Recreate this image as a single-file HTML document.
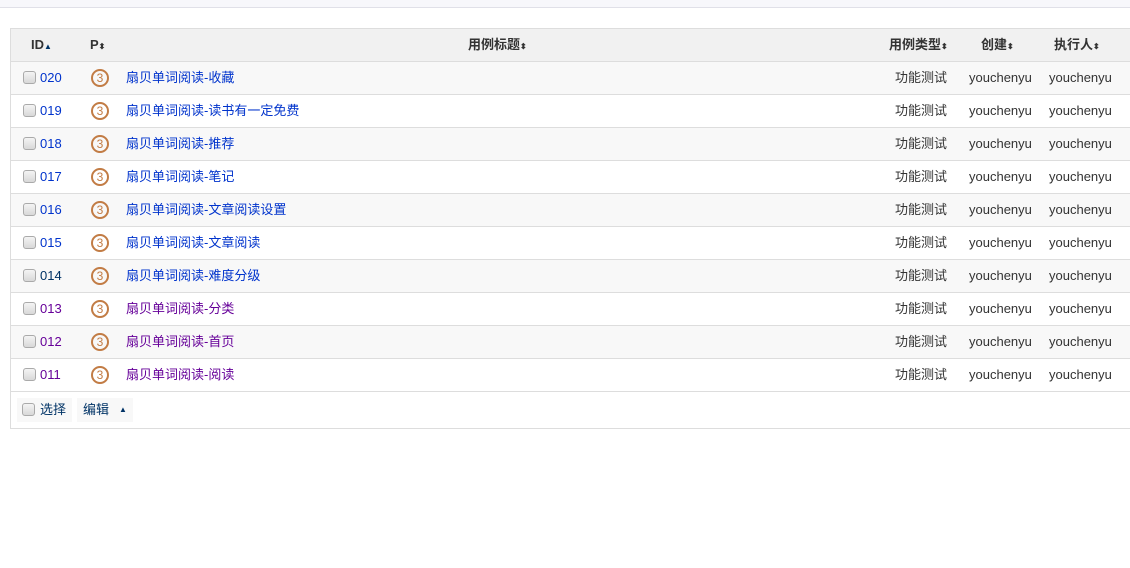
<!DOCTYPE html><html><head><meta charset="utf-8"><style>
body{margin:0;background:#fff;font-family:"Liberation Sans","Noto Sans CJK SC",sans-serif;font-size:13px;color:#333;width:1130px;height:568px;overflow:hidden;position:relative}
.top{position:absolute;left:0;top:0;width:1130px;height:7px;background:#f7f7fb;border-bottom:1px solid #e0e0e8}
.tbl{position:absolute;left:10px;top:28px;width:1125px;border:1px solid #ddd;border-right:none}
.row{position:relative;height:32px;border-bottom:1px solid #ddd;line-height:32px}
.hd{background:#f1f1f1;font-weight:bold;color:#333}
.even{background:#f8f8f8}
.c{position:absolute;top:0;white-space:nowrap}
.cb{position:absolute;left:12px;top:9px;width:11px;height:11px;border:1px solid #aaa;border-radius:3px;background:linear-gradient(#f4f4f4,#d8d8d8)}
a{color:#03c;text-decoration:none}
.v a{color:#609}
.p{position:absolute;left:80px;top:7px;width:14px;height:14px;border:2px solid #c27c45;border-radius:50%;color:#c27c45;font-size:12px;line-height:14px;text-align:center}
.s{font-size:8px;color:#333}
.foot{height:36px;position:relative}
</style></head><body>
<div class="top"></div>
<div class="tbl">
<div class="row hd"><span class="c" style="left:20px">ID<span class="s" style="color:#036">▲</span></span><span class="c" style="left:79px">P<span class="s">⬍</span></span><span class="c" style="left:457px">用例标题<span class="s">⬍</span></span><span class="c" style="left:878px">用例类型<span class="s">⬍</span></span><span class="c" style="left:970px">创建<span class="s">⬍</span></span><span class="c" style="left:1043px">执行人<span class="s">⬍</span></span></div>
<div class="row even"><span class="cb"></span><span class="c" style="left:29px"><a>020</a></span><span class="p">3</span><span class="c" style="left:115px"><a>扇贝单词阅读-收藏</a></span><span class="c" style="left:884px">功能测试</span><span class="c" style="left:958px">youchenyu</span><span class="c" style="left:1038px">youchenyu</span></div>
<div class="row"><span class="cb"></span><span class="c" style="left:29px"><a>019</a></span><span class="p">3</span><span class="c" style="left:115px"><a>扇贝单词阅读-读书有一定免费</a></span><span class="c" style="left:884px">功能测试</span><span class="c" style="left:958px">youchenyu</span><span class="c" style="left:1038px">youchenyu</span></div>
<div class="row even"><span class="cb"></span><span class="c" style="left:29px"><a>018</a></span><span class="p">3</span><span class="c" style="left:115px"><a>扇贝单词阅读-推荐</a></span><span class="c" style="left:884px">功能测试</span><span class="c" style="left:958px">youchenyu</span><span class="c" style="left:1038px">youchenyu</span></div>
<div class="row"><span class="cb"></span><span class="c" style="left:29px"><a>017</a></span><span class="p">3</span><span class="c" style="left:115px"><a>扇贝单词阅读-笔记</a></span><span class="c" style="left:884px">功能测试</span><span class="c" style="left:958px">youchenyu</span><span class="c" style="left:1038px">youchenyu</span></div>
<div class="row even"><span class="cb"></span><span class="c" style="left:29px"><a>016</a></span><span class="p">3</span><span class="c" style="left:115px"><a>扇贝单词阅读-文章阅读设置</a></span><span class="c" style="left:884px">功能测试</span><span class="c" style="left:958px">youchenyu</span><span class="c" style="left:1038px">youchenyu</span></div>
<div class="row"><span class="cb"></span><span class="c" style="left:29px"><a>015</a></span><span class="p">3</span><span class="c" style="left:115px"><a>扇贝单词阅读-文章阅读</a></span><span class="c" style="left:884px">功能测试</span><span class="c" style="left:958px">youchenyu</span><span class="c" style="left:1038px">youchenyu</span></div>
<div class="row even"><span class="cb"></span><span class="c" style="left:29px"><a style="color:#036">014</a></span><span class="p">3</span><span class="c" style="left:115px"><a>扇贝单词阅读-难度分级</a></span><span class="c" style="left:884px">功能测试</span><span class="c" style="left:958px">youchenyu</span><span class="c" style="left:1038px">youchenyu</span></div>
<div class="row v"><span class="cb"></span><span class="c" style="left:29px"><a>013</a></span><span class="p">3</span><span class="c" style="left:115px"><a>扇贝单词阅读-分类</a></span><span class="c" style="left:884px">功能测试</span><span class="c" style="left:958px">youchenyu</span><span class="c" style="left:1038px">youchenyu</span></div>
<div class="row even v"><span class="cb"></span><span class="c" style="left:29px"><a>012</a></span><span class="p">3</span><span class="c" style="left:115px"><a>扇贝单词阅读-首页</a></span><span class="c" style="left:884px">功能测试</span><span class="c" style="left:958px">youchenyu</span><span class="c" style="left:1038px">youchenyu</span></div>
<div class="row v"><span class="cb"></span><span class="c" style="left:29px"><a>011</a></span><span class="p">3</span><span class="c" style="left:115px"><a>扇贝单词阅读-阅读</a></span><span class="c" style="left:884px">功能测试</span><span class="c" style="left:958px">youchenyu</span><span class="c" style="left:1038px">youchenyu</span></div>
<div class="foot">
<div style="position:absolute;left:6px;top:6px;width:55px;height:24px;background:#f8f8f8"></div>
<span class="cb" style="left:11px;top:11px"></span><span class="c" style="left:29px;top:9px;line-height:18px;color:#036">选择</span>
<div style="position:absolute;left:66px;top:6px;width:56px;height:24px;background:#f8f8f8"></div>
<span class="c" style="left:72px;top:9px;line-height:18px;color:#036">编辑</span><span class="c" style="left:108px;top:9px;line-height:18px;font-size:8px;color:#036">▲</span>
</div>
</div>
</body></html>
